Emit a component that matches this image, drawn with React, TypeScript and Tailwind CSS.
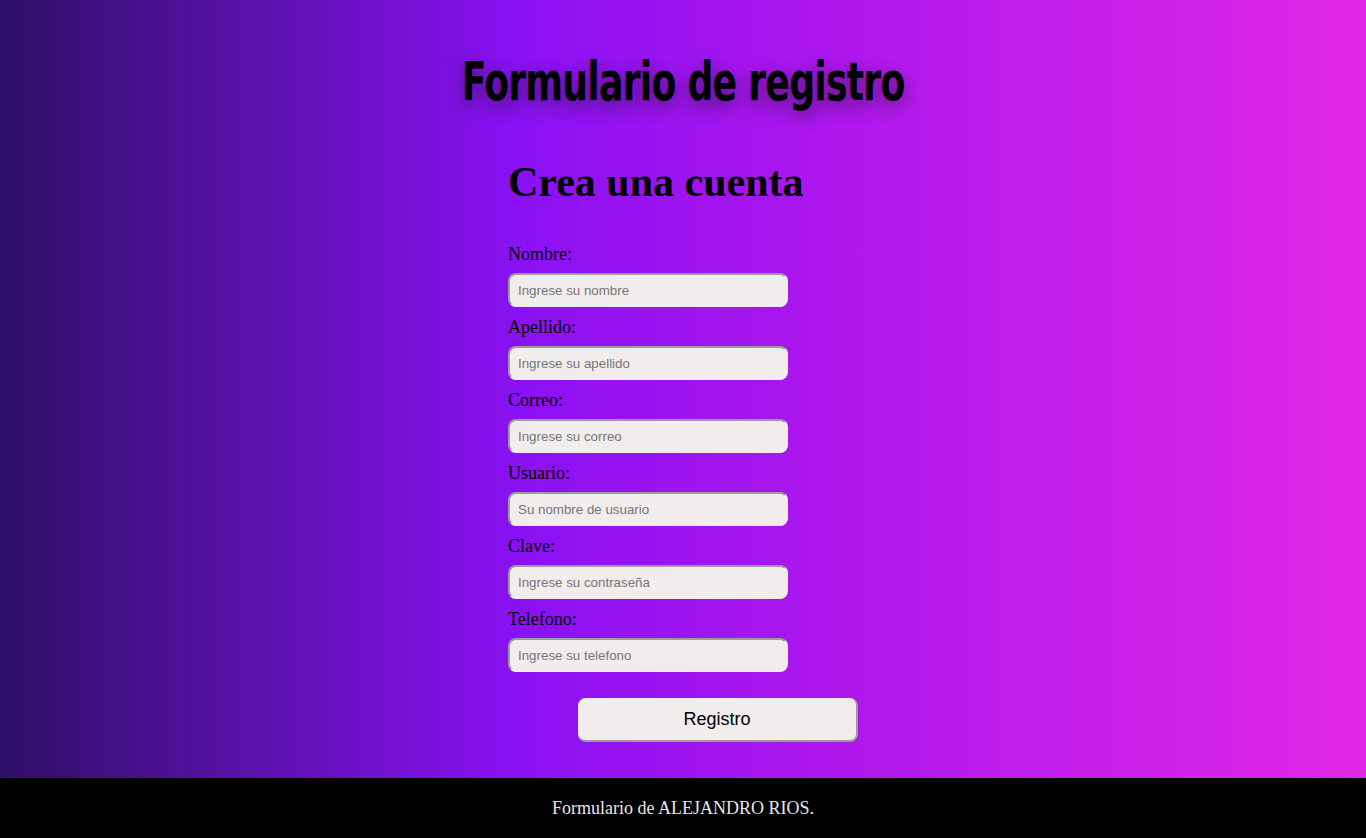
import React from 'react'

const fields = [
  { id: 'nombre', label: 'Nombre:', placeholder: 'Ingrese su nombre', type: 'text' },
  { id: 'apellido', label: 'Apellido:', placeholder: 'Ingrese su apellido', type: 'text' },
  { id: 'correo', label: 'Correo:', placeholder: 'Ingrese su correo', type: 'email' },
  { id: 'usuario', label: 'Usuario:', placeholder: 'Su nombre de usuario', type: 'text' },
  { id: 'clave', label: 'Clave:', placeholder: 'Ingrese su contraseña', type: 'password' },
  { id: 'telefono', label: 'Telefono:', placeholder: 'Ingrese su telefono', type: 'tel' },
]

export default function App() {
  return (
    <div className="min-h-screen flex flex-col font-['Liberation_Serif',serif] text-black">
      <main className="flex-grow bg-[linear-gradient(to_right,#2e1066_0%,#8a11f4_38%,#a515ee_55%,#e127e6_100%)] flex flex-col items-center">
        <h1 className="mt-[44px] h-[76px] flex items-center font-['DejaVu_Sans_Condensed','DejaVu_Sans',sans-serif] font-bold text-[54px] leading-none tracking-[-1px] scale-x-[0.745] [text-shadow:0_6px_18px_rgba(50,25,70,0.7)]">
          Formulario de registro
        </h1>

        <form className="w-[350px] mt-[38px] pb-[36px]" onSubmit={(e) => e.preventDefault()}>
          <h2 className="font-bold text-[42px] leading-[48px] mb-[38px]">Crea una cuenta</h2>

          {fields.map((f) => (
            <div key={f.id} className="mb-[10px]">
              <label htmlFor={f.id} className="block text-[18px] leading-[21px]">
                {f.label}
              </label>
              <input
                id={f.id}
                type={f.type}
                placeholder={f.placeholder}
                className="mt-[8px] block w-[280px] h-[34px] rounded-[8px] bg-[#f1eded] border-2 border-[#f1eded] border-t-[#9c9c9c] border-l-[#9c9c9c] px-[8px] font-['Liberation_Sans',Arial,sans-serif] text-[13.33px] placeholder:text-[#767676] outline-none"
              />
            </div>
          ))}

          <button
            type="submit"
            className="mt-[26px] ml-[70px] block w-[280px] h-[44px] rounded-[8px] bg-[#f1eded] border-b-2 border-r-2 border-[#9c9c9c] font-['Liberation_Sans',Arial,sans-serif] text-[18px] text-black"
          >
            Registro
          </button>
        </form>
      </main>

      <footer className="h-[60px] bg-black flex items-center justify-center text-[18px] text-[#e6e6e6]">
        Formulario de ALEJANDRO RIOS.
      </footer>
    </div>
  )
}
